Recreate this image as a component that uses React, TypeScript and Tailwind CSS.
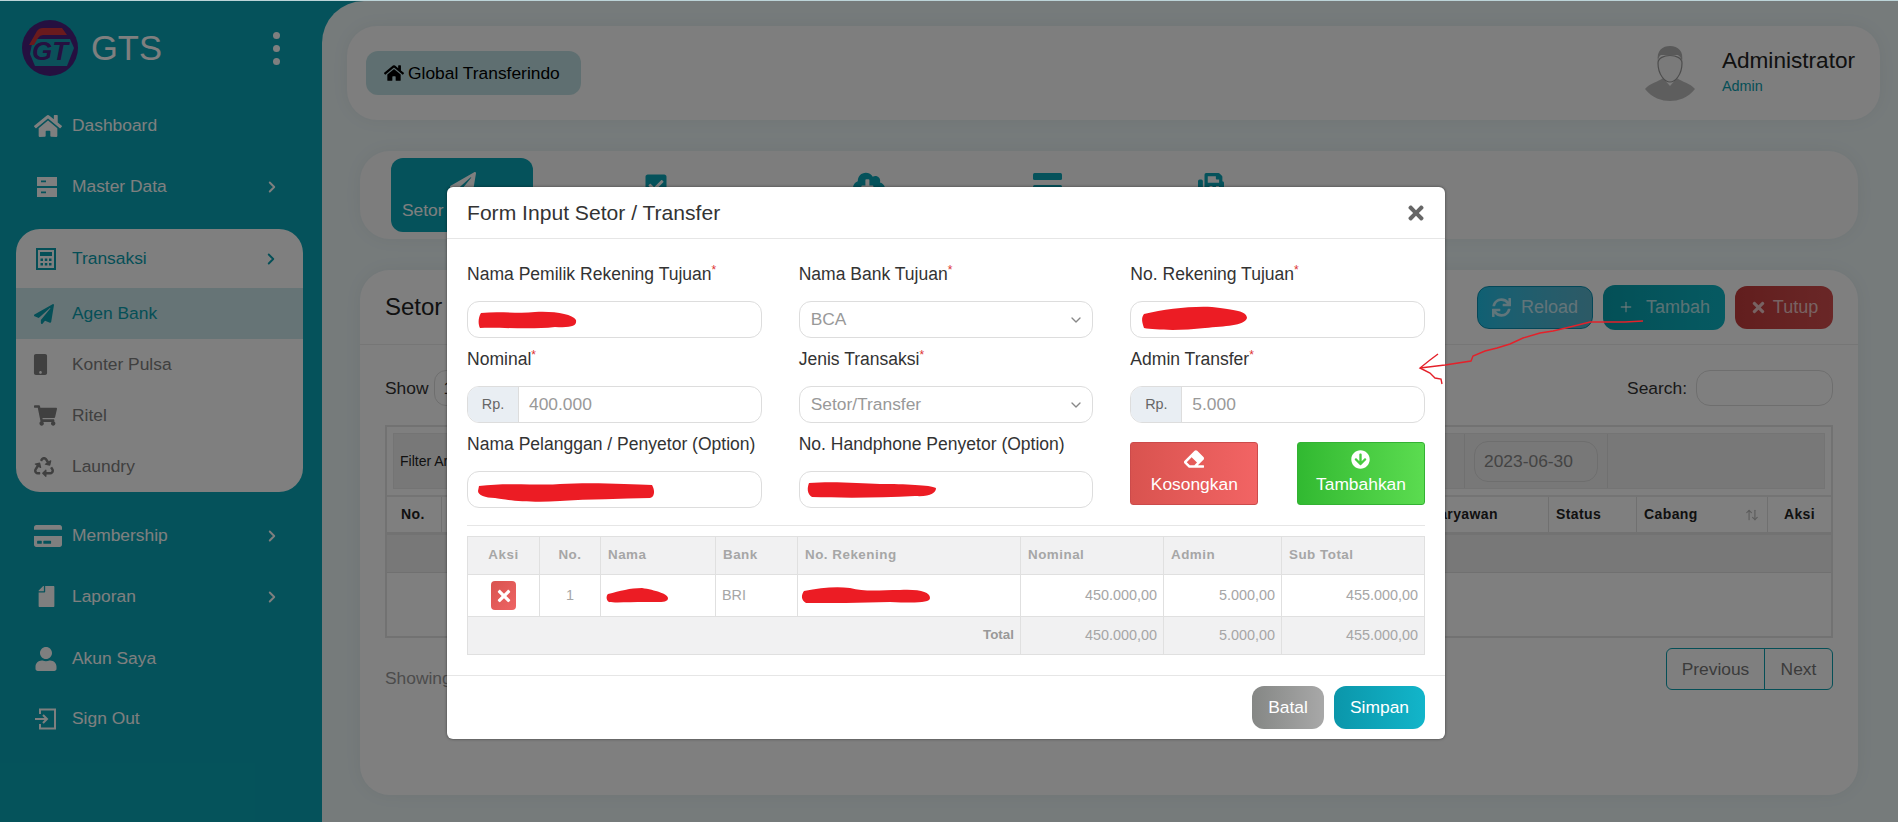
import type { ReactNode } from "react";
import { ChevronRight, ChevronDown, Plus, ArrowUpDown } from "lucide-react";
import {
  FaHome,
  FaPaperPlane,
  FaMobile,
  FaShoppingCart,
  FaRecycle,
  FaCreditCard,
  FaFile,
  FaUser,
  FaCheckSquare,
  FaCloudDownloadAlt,
  FaFax,
  FaSync,
  FaTimes,
  FaEraser,
  FaArrowCircleDown,
} from "react-icons/fa";

function Logo() {
  return (
    <svg viewBox="0 0 56 56" className="w-[56px] h-[56px] shrink-0">
      <circle cx="28" cy="28" r="28" fill="#4a2180" />
      <path d="M11 19 L48 19 L52 28 L45 46 L13 46 L8 34 Z" fill="#16a0b4" />
      <path d="M7 25 L15 11 Q17 8 21 8 L40 8 L45 15 L21 15 Q18 15 16 18 L12 25 Z" fill="#d4353a" />
      <text x="28" y="40" textAnchor="middle" fontFamily="Liberation Sans" fontWeight="700" fontStyle="italic" fontSize="26" fill="#4a2180">
        GT
      </text>
    </svg>
  );
}

function DrawerIcon() {
  return (
    <svg viewBox="0 0 20 20" className="w-[20px] h-[20px] ml-[3px]" fill="currentColor">
      <path fillRule="evenodd" d="M0 0h20v9H0z M4 3.6v1.6h5V3.6z" />
      <path fillRule="evenodd" d="M0 11h20v9H0z M4 14.6v1.6h5v-1.6z" />
    </svg>
  );
}

function CalcIcon() {
  return (
    <svg viewBox="0 0 20 22" className="w-[20px] h-[22px] ml-[2px]" fill="currentColor">
      <path fillRule="evenodd" d="M0 0h20v22H0z M2 2v18h16V2z" />
      <path d="M4 4h12v4H4z" />
      <path d="M4.5 10.5h2.5v2.5H4.5z M8.8 10.5h2.5v2.5H8.8z M13 10.5h2.5v2.5H13z M4.5 15h2.5v2.5H4.5z M8.8 15h2.5v2.5H8.8z M13 15h2.5v2.5H13z" />
    </svg>
  );
}

function BarsIcon() {
  return (
    <svg viewBox="0 0 29 30" className="w-[29px] h-[30px]" fill="currentColor">
      <rect x="0" y="0" width="29" height="7" rx="1.5" />
      <rect x="0" y="12" width="29" height="7" rx="1.5" />
      <rect x="0" y="23" width="29" height="7" rx="1.5" />
    </svg>
  );
}

function SignOutIcon() {
  return (
    <svg viewBox="0 0 24 24" className="w-[24px] h-[24px]" fill="none" stroke="currentColor" strokeWidth="2">
      <path d="M6 7V2.5h15v19H6V17" />
      <path d="M1 12h11" />
      <path d="M9 8l4 4-4 4" />
    </svg>
  );
}

function Avatar() {
  return (
    <svg viewBox="0 0 52 56" className="w-[52px] h-[56px]">
      <path d="M1 44 C6 38 14 37 19 33 L26 41 L33 33 C38 37 46 38 51 44 C44 53 34 56 26 56 C18 56 8 53 1 44 Z" fill="#bdbdbd" />
      <path d="M14 18 C14 30 21 37 26 37 C31 37 38 30 38 18 C38 8 14 8 14 18 Z" fill="#f4f4f4" stroke="#9a9a9a" strokeWidth="1.2" />
      <path d="M14 17 C12 5 19 1 26 1 C34 1 40 6 38 17 C37 12 35 10 33 10 C26 11 20 10 17 10 C15 11 14 14 14 17 Z" fill="#b2b2b2" />
    </svg>
  );
}

function NavRow({
  icon,
  label,
  arrow = false,
}: {
  icon: ReactNode;
  label: string;
  arrow?: boolean;
}) {
  return (
    <div className="flex items-center h-[61px] pl-[34px] pr-[41px] text-white">
      <span className="w-[38px] flex items-center text-white">{icon}</span>
      <span className="text-[17.4px]">{label}</span>
      {arrow && <ChevronRight className="ml-auto w-[18px] h-[18px]" strokeWidth={2.5} />}
    </div>
  );
}

function SubRow({
  icon,
  label,
  active = false,
}: {
  icon: ReactNode;
  label: string;
  active?: boolean;
}) {
  return (
    <div
      className={`flex items-center h-[51px] pl-[18px] ${
        active ? "bg-[#cce9ec] text-[#0a9eae]" : "text-[#808080]"
      }`}
    >
      <span className="w-[38px] flex items-center">{icon}</span>
      <span className="text-[17.4px]">{label}</span>
    </div>
  );
}

function Sidebar() {
  return (
    <aside className="w-[322px] shrink-0 bg-[#0aa5b6]">
      <div className="h-[94px] flex items-start pt-[19px] pl-[22px] pr-[42px]">
        <Logo />
        <span className="ml-[13px] mt-[8px] text-[34.5px] leading-[40px] text-white">GTS</span>
        <div className="ml-auto mt-[12px] flex flex-col gap-[6px]">
          <span className="w-[7px] h-[7px] rounded-full bg-white" />
          <span className="w-[7px] h-[7px] rounded-full bg-white" />
          <span className="w-[7px] h-[7px] rounded-full bg-white" />
        </div>
      </div>
      <NavRow icon={<FaHome className="text-[28px]" />} label="Dashboard" />
      <NavRow icon={<DrawerIcon />} label="Master Data" arrow />
      <div className="ml-[16px] mr-[19px] mt-[12px] mb-[13px] bg-white rounded-[24px] overflow-hidden">
        <div className="flex items-center h-[59px] pl-[18px] pr-[23px] text-[#0a9eae]">
          <span className="w-[38px] flex items-center">
            <CalcIcon />
          </span>
          <span className="text-[17.4px]">Transaksi</span>
          <ChevronRight className="ml-auto w-[18px] h-[18px]" strokeWidth={2.5} />
        </div>
        <SubRow icon={<FaPaperPlane className="text-[20px]" />} label="Agen Bank" active />
        <SubRow icon={<FaMobile className="text-[21px] -ml-[4px]" />} label="Konter Pulsa" />
        <SubRow icon={<FaShoppingCart className="text-[23px]" />} label="Ritel" />
        <SubRow icon={<FaRecycle className="text-[20px]" />} label="Laundry" />
      </div>
      <NavRow icon={<FaCreditCard className="text-[28px]" />} label="Membership" arrow />
      <NavRow icon={<FaFile className="text-[21px] ml-[2px] -scale-x-100" />} label="Laporan" arrow />
      <div className="pt-px">
        <NavRow icon={<FaUser className="text-[24px]" />} label="Akun Saya" />
      </div>
      <div className="-mt-px">
        <NavRow icon={<SignOutIcon />} label="Sign Out" />
      </div>
    </aside>
  );
}

const TAB_ICONS = [
  { id: "check", icon: <FaCheckSquare className="text-[24px]" />, w: "w-[246px]", pad: "pt-[15px]" },
  { id: "cloud", icon: <FaCloudDownloadAlt className="text-[32px]" />, w: "w-[180px]", pad: "pt-[10px]" },
  { id: "bars", icon: <BarsIcon />, w: "w-[176px]", pad: "pt-[15px]" },
  { id: "fax", icon: <FaFax className="text-[26px]" />, w: "w-[152px]", pad: "pt-[15px]" },
];

function Tabs() {
  return (
    <div className="mt-[31px] ml-[38px] mr-[40px] h-[88px] bg-[#fbfbfb] rounded-[30px] shadow-[0_0_18px_rgba(0,0,0,0.05)] flex items-center pl-[31px]">
      <div className="w-[142px] h-[74px] rounded-[12px] bg-[#0aa5b6] text-white flex flex-col items-start pt-[14px] pl-[11px] text-[17.4px]">
        <FaPaperPlane className="text-[26px] ml-[48px]" />
        <span className="-mt-px">Setor</span>
      </div>
      {TAB_ICONS.map((t) => (
        <div key={t.id} className={`${t.w} ${t.pad} h-[74px] flex flex-col items-center text-[#0aa5b6]`}>
          {t.icon}
        </div>
      ))}
    </div>
  );
}

function BackTable() {
  return (
    <div className="mt-[19px] border-2 border-[#e4e4e4]">
      <div className="h-[70px] p-[6px] border-b-2 border-[#e8e8e8]">
        <div className="h-full bg-[#f1f1f1] flex items-center pl-[6px] border border-[#e8e8e8] text-[14px] text-[#222]">
          <span>Filter Area</span>
          <span className="ml-auto mr-[19px] text-[15px] text-[#888]">s/d</span>
          <div className="self-stretch w-[144px] border-x border-[#e0e0e0] flex items-center justify-center">
            <div className="w-[124px] h-[41px] rounded-[14px] border border-[#dcdcdc] flex items-center pl-[9px] text-[17.4px] text-[#888]">
              2023-06-30
            </div>
          </div>
          <div className="w-[216px]" />
        </div>
      </div>
      <div className="h-[38px] grid grid-cols-[55px_1fr_88px_131px_63px] text-[14px] font-bold tracking-[0.4px] text-[#222] border-b-[3px] border-[#e4e4e4]">
        <div className="flex items-center pl-[14px] border-r border-[#e0e0e0]">No.</div>
        <div className="flex items-center justify-end pr-[50px] border-r border-[#e0e0e0]">Karyawan</div>
        <div className="flex items-center pl-[7px] border-r border-[#e0e0e0]">Status</div>
        <div className="flex items-center pl-[7px] pr-[8px] border-r border-[#e0e0e0]">
          Cabang
          <ArrowUpDown className="ml-auto w-[14px] h-[14px] text-[#bbb]" />
        </div>
        <div className="flex items-center justify-center">Aksi</div>
      </div>
      <div className="h-[38px] bg-[#f0f0f0] border-b border-[#e0e0e0]" />
      <div className="h-[63px]" />
    </div>
  );
}

function MainContent() {
  return (
    <main className="flex-1 min-w-0 bg-[#ecf6f7] rounded-tl-[42px] pt-[25px]">
      <div className="ml-[25px] mr-[18px] h-[94px] bg-[#fcfcfc] rounded-[30px] shadow-[0_0_18px_rgba(0,0,0,0.05)] flex items-center pl-[19px] pr-[25px]">
        <div className="h-[44px] w-[215px] rounded-[12px] bg-[#bfdfe2] flex items-center pl-[18px] gap-[4px] text-[17.4px] text-black">
          <FaHome className="text-[20px]" />
          Global Transferindo
        </div>
        <div className="ml-auto">
          <Avatar />
        </div>
        <div className="ml-[26px] flex flex-col">
          <span className="text-[22.6px] leading-[26px] text-[#222]">Administrator</span>
          <span className="text-[14.4px] leading-[24px] text-[#0a9eae]">Admin</span>
        </div>
      </div>
      <Tabs />
      <div className="mt-[31px] ml-[38px] mr-[40px] h-[525px] bg-white rounded-[30px] shadow-[0_0_18px_rgba(0,0,0,0.05)]">
        <div className="h-[75px] border-b border-[#ececec] flex items-center pl-[25px] pr-[25px]">
          <span className="text-[24px] text-[#222]">Setor</span>
          <div className="ml-auto flex items-center gap-[10px] text-[18px] text-white/70">
            <button className="w-[116px] h-[43px] rounded-[12px] border border-[#0a8fb0] bg-linear-to-r from-[#1fc0e6] to-[#5ab4cc] flex items-center justify-center gap-[10px]">
              <FaSync className="text-[19px]" />
              Reload
            </button>
            <button className="w-[122px] h-[45px] rounded-[12px] bg-linear-to-r from-[#08a0ae] to-[#0cb4c4] flex items-center justify-center gap-[12px]">
              <Plus className="w-[16px] h-[16px]" />
              Tambah
            </button>
            <button className="w-[98px] h-[43px] rounded-[12px] bg-linear-to-r from-[#c43c3c] to-[#d44e4e] flex items-center justify-center gap-[6px]">
              <FaTimes className="text-[17px]" />
              Tutup
            </button>
          </div>
        </div>
        <div className="px-[25px] pt-[25px]">
          <div className="h-[36px] flex items-center text-[17.4px] text-[#333]">
            <span>Show</span>
            <div className="ml-[5px] w-[70px] h-[36px] rounded-[12px] border border-[#ddd] flex items-center pl-[9px]">10</div>
            <span className="ml-auto">Search:</span>
            <div className="ml-[9px] w-[137px] h-[36px] rounded-[14px] border border-[#ddd]" />
          </div>
          <BackTable />
          <div className="mt-[10px] flex items-start justify-between text-[17.4px] text-[#999]">
            <span className="mt-[17px]">Showing 0 to 0 of 0 entries</span>
            <div className="h-[42px] flex border border-[#0a9eae] rounded-[6px] text-[#777]">
              <span className="w-[98px] flex items-center justify-center border-r border-[#0a9eae]">Previous</span>
              <span className="w-[67px] flex items-center justify-center">Next</span>
            </div>
          </div>
        </div>
      </div>
    </main>
  );
}

function Label({ text, required = false }: { text: string; required?: boolean }) {
  return (
    <div className="h-[48px] pb-[6px] flex items-center text-[17.55px] text-[#333]">
      <span>
        {text}
        {required && <sup className="text-[12px] text-[#d33]">*</sup>}
      </span>
    </div>
  );
}

const fieldClass =
  "h-[37px] border border-[#dddddd] rounded-[12px] flex items-center text-[17.4px] text-[#999]";

function TextField({ label, required }: { label: string; required?: boolean }) {
  return (
    <div>
      <Label text={label} required={required} />
      <div className={fieldClass} />
    </div>
  );
}

function SelectField({ label, value }: { label: string; value: string }) {
  return (
    <div>
      <Label text={label} required />
      <div className={`${fieldClass} pl-[11px] pr-[8px] justify-between`}>
        {value}
        <ChevronDown className="w-[16px] h-[16px] text-[#888]" />
      </div>
    </div>
  );
}

function MoneyField({ label, value }: { label: string; value: string }) {
  return (
    <div>
      <Label text={label} required />
      <div className={`${fieldClass} overflow-hidden`}>
        <span className="w-[51px] h-full bg-[#e9eef3] border-r border-[#dddddd] flex items-center justify-center text-[14.4px] text-[#666]">
          Rp.
        </span>
        <span className="pl-[10px]">{value}</span>
      </div>
    </div>
  );
}

function Modal() {
  const th = "border border-[#e0e0e0] px-[7px] font-bold tracking-[0.5px]";
  const td = "border border-[#e0e0e0] px-[6px]";
  return (
    <div className="ml-[447px] mt-[186px] w-[998px] h-[552px] bg-white rounded-[6px] shadow-[0_0_3px_rgba(0,0,0,0.5)]">
      <div className="h-[52px] border-b border-[#e6e6e6] flex items-center justify-between pl-[20px] pr-[18px]">
        <span className="text-[21.1px] text-[#333]">Form Input Setor / Transfer</span>
        <FaTimes className="text-[22px] text-[#666]" />
      </div>
      <div className="px-[20px] pt-[14px]">
        <div className="grid grid-cols-3 gap-x-[37px]">
          <TextField label="Nama Pemilik Rekening Tujuan" required />
          <SelectField label="Nama Bank Tujuan" value="BCA" />
          <TextField label="No. Rekening Tujuan" required />
          <MoneyField label="Nominal" value="400.000" />
          <SelectField label="Jenis Transaksi" value="Setor/Transfer" />
          <MoneyField label="Admin Transfer" value="5.000" />
          <TextField label="Nama Pelanggan / Penyetor (Option)" />
          <TextField label="No. Handphone Penyetor (Option)" />
          <div className="pt-[19px] flex justify-between text-[17.4px] text-white">
            <button className="w-[128px] h-[63px] rounded-[3px] border border-[#cc4b4b] bg-linear-to-r from-[#d9534f] to-[#f26464] flex flex-col items-center justify-center gap-[2px]">
              <FaEraser className="text-[20px]" />
              Kosongkan
            </button>
            <button className="w-[128px] h-[63px] rounded-[3px] border border-[#33b233] bg-linear-to-r from-[#31b931] to-[#5bdc50] flex flex-col items-center justify-center gap-[2px]">
              <FaArrowCircleDown className="text-[19px]" />
              Tambahkan
            </button>
          </div>
        </div>
        <div className="mt-[17px] border-t border-[#e6e6e6]" />
        <table className="mt-[10px] w-[957px] table-fixed border-collapse text-[14.4px] text-[#a6a6a6]">
          <colgroup>
            <col className="w-[72px]" />
            <col className="w-[61px]" />
            <col className="w-[115px]" />
            <col className="w-[82px]" />
            <col className="w-[223px]" />
            <col className="w-[143px]" />
            <col className="w-[118px]" />
            <col className="w-[143px]" />
          </colgroup>
          <thead>
            <tr className="h-[38px] bg-[#f1f1f2] text-[13.4px]">
              <th className={`${th} text-center`}>Aksi</th>
              <th className={`${th} text-center`}>No.</th>
              <th className={`${th} text-left`}>Nama</th>
              <th className={`${th} text-left`}>Bank</th>
              <th className={`${th} text-left`}>No. Rekening</th>
              <th className={`${th} text-left`}>Nominal</th>
              <th className={`${th} text-left`}>Admin</th>
              <th className={`${th} text-left`}>Sub Total</th>
            </tr>
          </thead>
          <tbody>
            <tr className="h-[42px]">
              <td className={td}>
                <div className="mx-auto w-[25px] h-[29px] rounded-[4px] bg-linear-to-br from-[#d9534f] to-[#ee6464] flex items-center justify-center text-white">
                  <FaTimes className="text-[18px]" />
                </div>
              </td>
              <td className={`${td} text-center`}>1</td>
              <td className={td} />
              <td className={`${td} text-left`}>BRI</td>
              <td className={td} />
              <td className={`${td} text-right`}>450.000,00</td>
              <td className={`${td} text-right`}>5.000,00</td>
              <td className={`${td} text-right`}>455.000,00</td>
            </tr>
            <tr className="h-[38px] bg-[#f1f1f2]">
              <td colSpan={5} className={`${td} text-right font-bold text-[13.4px] text-[#999]`}>
                Total
              </td>
              <td className={`${td} text-right`}>450.000,00</td>
              <td className={`${td} text-right`}>5.000,00</td>
              <td className={`${td} text-right`}>455.000,00</td>
            </tr>
          </tbody>
        </table>
      </div>
      <div className="mt-[20px] pt-[10px] pr-[20px] border-t border-[#e6e6e6] flex justify-end gap-[10px] text-[17.4px] text-white">
        <button className="w-[72px] h-[43px] rounded-[12px] bg-linear-to-r from-[#858785] to-[#a8a8a8]">Batal</button>
        <button className="w-[91px] h-[43px] rounded-[12px] bg-linear-to-r from-[#0b96aa] to-[#12b5ca]">Simpan</button>
      </div>
    </div>
  );
}

// red marker strokes drawn on the screenshot by hand
function Annotations() {
  return (
    <svg viewBox="0 0 1898 822" className="absolute inset-0 w-[1898px] h-[822px] pointer-events-none">
      <g fill="#ec1c24">
        <path d="M481 313 C500 311 520 314 535 312 C555 311 572 314 576 320 C577 326 572 328 555 327 C530 330 500 327 480 328 C478 324 478 318 481 313 Z" />
        <path d="M1144 314 C1165 309 1190 306 1212 307 C1235 310 1247 311 1247 318 C1244 326 1225 326 1205 328 C1180 331 1155 330 1144 328 C1142 322 1141 318 1144 314 Z" />
        <path d="M479 486 C510 482 540 486 560 484 C590 482 630 484 652 485 C655 490 655 497 650 498 C620 499 590 499 560 501 C530 503 505 500 495 498 C485 498 478 495 478 491 Z" />
        <path d="M809 483 C830 481 860 483 880 484 C905 484 930 485 936 488 C936 493 930 497 915 496 C880 498 840 498 812 497 C807 494 807 488 809 483 Z" />
        <path d="M608 594 C620 591 630 588 642 588 C655 590 668 594 668 598 C668 603 660 602 645 602 C630 602 615 603 609 602 C606 600 606 596 608 594 Z" />
        <path d="M804 591 C820 588 835 586 850 588 C865 592 880 590 900 590 C920 589 930 592 930 598 C930 603 915 603 890 602 C860 603 830 603 806 603 C801 600 801 595 804 591 Z" />
      </g>
      <g fill="none" stroke="#e4212a" strokeWidth="1.4">
        <path d="M1643 321 L1625 322 L1590 322 L1570 327 L1553 331 L1540 333 L1523 338 L1510 344 L1497 348 L1485 351 L1473 356 L1471 361 L1445 365 L1420 368" />
        <path d="M1438 354 L1430 360 L1420 368 L1430 373 L1435 378 L1441 379 L1442 384" />
      </g>
    </svg>
  );
}

export default function App() {
  return (
    <div className="relative w-[1898px] h-[822px] overflow-hidden bg-[#0aa5b6] font-['Liberation_Sans',Arial,sans-serif]">
      <div className="h-px bg-[#bcd4d8]" />
      <div className="relative flex h-[821px]">
        <Sidebar />
        <MainContent />
        <div className="absolute inset-0 bg-black/50 overflow-hidden">
          <Modal />
        </div>
      </div>
      <Annotations />
    </div>
  );
}
